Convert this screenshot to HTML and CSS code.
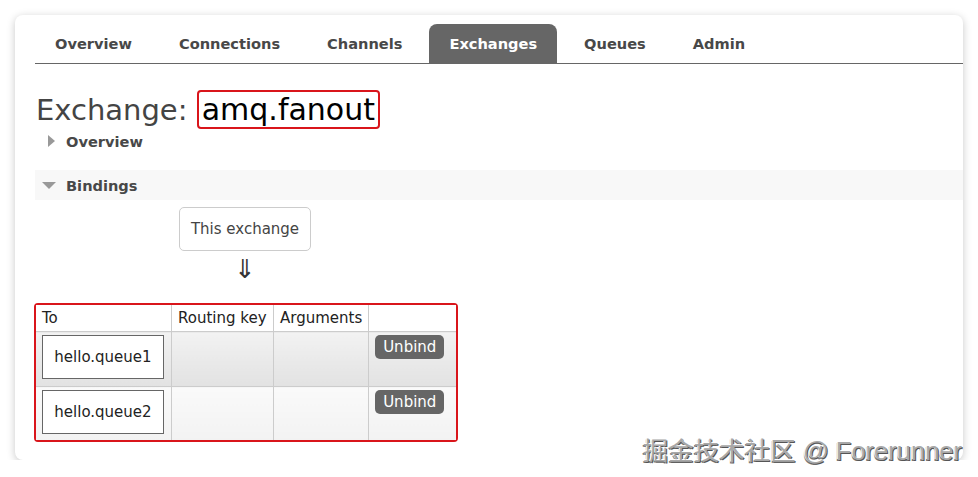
FILE: index.html
```html
<!DOCTYPE html>
<html lang="en">
<head>
  <meta charset="UTF-8">
  <meta name="viewport" content="width=device-width, initial-scale=1.0">
  <title>Exchange: amq.fanout</title>
  <link rel="stylesheet" href="styles.css">
</head>
<body>
  <div class="page">
    <ul class="tabs">
      <li class="tab">Overview</li>
      <li class="tab">Connections</li>
      <li class="tab">Channels</li>
      <li class="tab active">Exchanges</li>
      <li class="tab">Queues</li>
      <li class="tab">Admin</li>
    </ul>

    <h1 class="title">Exchange: <span class="name">amq.fanout</span></h1>

    <div class="section closed">
      <span class="arrow-right"></span>Overview
    </div>

    <div class="section open">
      <span class="arrow-down"></span>Bindings
    </div>

    <div class="bindings">
      <div class="source">
        <div class="this-exchange">This exchange</div>
        <div class="down">&#8659;</div>
      </div>

      <div class="table-wrap">
        <table class="list">
          <thead>
            <tr>
              <th class="col-to">To</th>
              <th class="col-key">Routing key</th>
              <th class="col-args">Arguments</th>
              <th class="col-btn"></th>
            </tr>
          </thead>
          <tbody>
            <tr class="alt1">
              <td><div class="queue">hello.queue1</div></td>
              <td></td>
              <td></td>
              <td><button class="unbind">Unbind</button></td>
            </tr>
            <tr class="alt2">
              <td><div class="queue">hello.queue2</div></td>
              <td></td>
              <td></td>
              <td><button class="unbind">Unbind</button></td>
            </tr>
          </tbody>
        </table>
      </div>
    </div>
  </div>

  <div class="watermark">掘金技术社区 @ Forerunner</div>
</body>
</html>
```

FILE: styles.css
```css
/* styles.css */
body {
  margin: 0;
  background-color: #ffffff;
  font-family: "DejaVu Sans", Verdana, sans-serif;
  color: #484848;
}

.page {
  margin: 15px 15px 0 15px;
  width: 928px;
  height: 436px;
  padding: 9px 0 0 20px;
  background-color: #fff;
  border-radius: 8px;
  box-shadow: 0 2px 8px rgba(0, 0, 0, 0.22);
}

.tabs {
  list-style: none;
  margin: 0;
  padding: 0;
  display: flex;
  gap: 7px;
  border-bottom: 1px solid #666;
  height: 39px;
}

.tab {
  padding: 0 20px;
  line-height: 39px;
  font-size: 14.6px;
  font-weight: bold;
  color: #484848;
  border-radius: 8px 8px 0 0;
}

.tab.active {
  background-color: #666;
  color: #fff;
}

.title {
  margin: 26px 0 0 1px;
  font-size: 29px;
  font-weight: normal;
  color: #444;
  line-height: 38px;
  height: 38px;
}

.name {
  display: inline-block;
  font-size: 30px;
  color: #000;
  border: 2px solid #d9151b;
  border-radius: 4px;
  padding: 0 3px;
  line-height: 35px;
}

.section {
  font-size: 14.6px;
  font-weight: bold;
  color: #484848;
  display: flex;
  align-items: center;
}

.section.closed {
  margin-top: 1px;
  padding-left: 13px;
  height: 24px;
}

.section.open {
  margin-top: 17px;
  padding-left: 7px;
  height: 30px;
  background-color: #f8f8f8;
}

.arrow-right {
  width: 0;
  height: 0;
  border-top: 6px solid transparent;
  border-bottom: 6px solid transparent;
  border-left: 7px solid #999;
  margin-right: 11px;
}

.arrow-down {
  width: 0;
  height: 0;
  border-left: 7px solid transparent;
  border-right: 7px solid transparent;
  border-top: 7px solid #999;
  margin-right: 10px;
}

.source {
  width: 132px;
  margin: 7px 0 0 144px;
  text-align: center;
}

.this-exchange {
  height: 42px;
  line-height: 42px;
  border: 1px solid #ccc;
  border-radius: 5px;
  font-size: 15px;
  color: #444;
}

.down {
  font-size: 26px;
  line-height: 36px;
  height: 32px;
  color: #333;
}

.table-wrap {
  display: inline-block;
  margin: 20px 0 0 -1px;
  border: 2px solid #d9151b;
  border-radius: 4px;
}

.list {
  border-collapse: collapse;
  font-size: 15px;
  color: #222;
}

.list th {
  font-weight: normal;
  text-align: left;
  height: 26px;
  padding: 0 6px;
  border-left: 1px solid #ccc;
  border-bottom: 1px solid #ccc;
  background-color: #fff;
}

.list th:first-child,
.list td:first-child {
  border-left: none;
}

.col-to { width: 123px; }
.col-key { width: 89px; }
.col-args { width: 82px; }
.col-btn { width: 75px; }

.list td {
  border-left: 1px solid #ccc;
  border-bottom: 1px solid #ccc;
  vertical-align: top;
  padding: 3px 6px;
}

.list tr:last-child td {
  border-bottom: none;
}

.alt1 td {
  height: 48px;
  background: linear-gradient(#f2f2f2, #e2e2e2);
}

.alt2 td {
  height: 47px;
  background: linear-gradient(#fafafa, #f2f2f2);
}

.queue {
  width: 120px;
  height: 42px;
  line-height: 42px;
  text-align: center;
  border: 1px solid #666;
  background-color: #fff;
  color: #222;
}

.unbind {
  font-family: "DejaVu Sans", Verdana, sans-serif;
  font-size: 15px;
  color: #fff;
  background-color: #666;
  border: none;
  border-radius: 5px;
  height: 24px;
  width: 69px;
  padding: 0;
}

.watermark {
  position: absolute;
  right: 16px;
  top: 430px;
  font-family: "Liberation Sans", "Noto Sans CJK SC", sans-serif;
  font-size: 25.5px;
  color: #a8a8a8;
  text-shadow: -1px -1px 0 #fff, 1px 1px 0 #555, 1px -1px 0 #fff, -1px 1px 0 #777;
}
```
